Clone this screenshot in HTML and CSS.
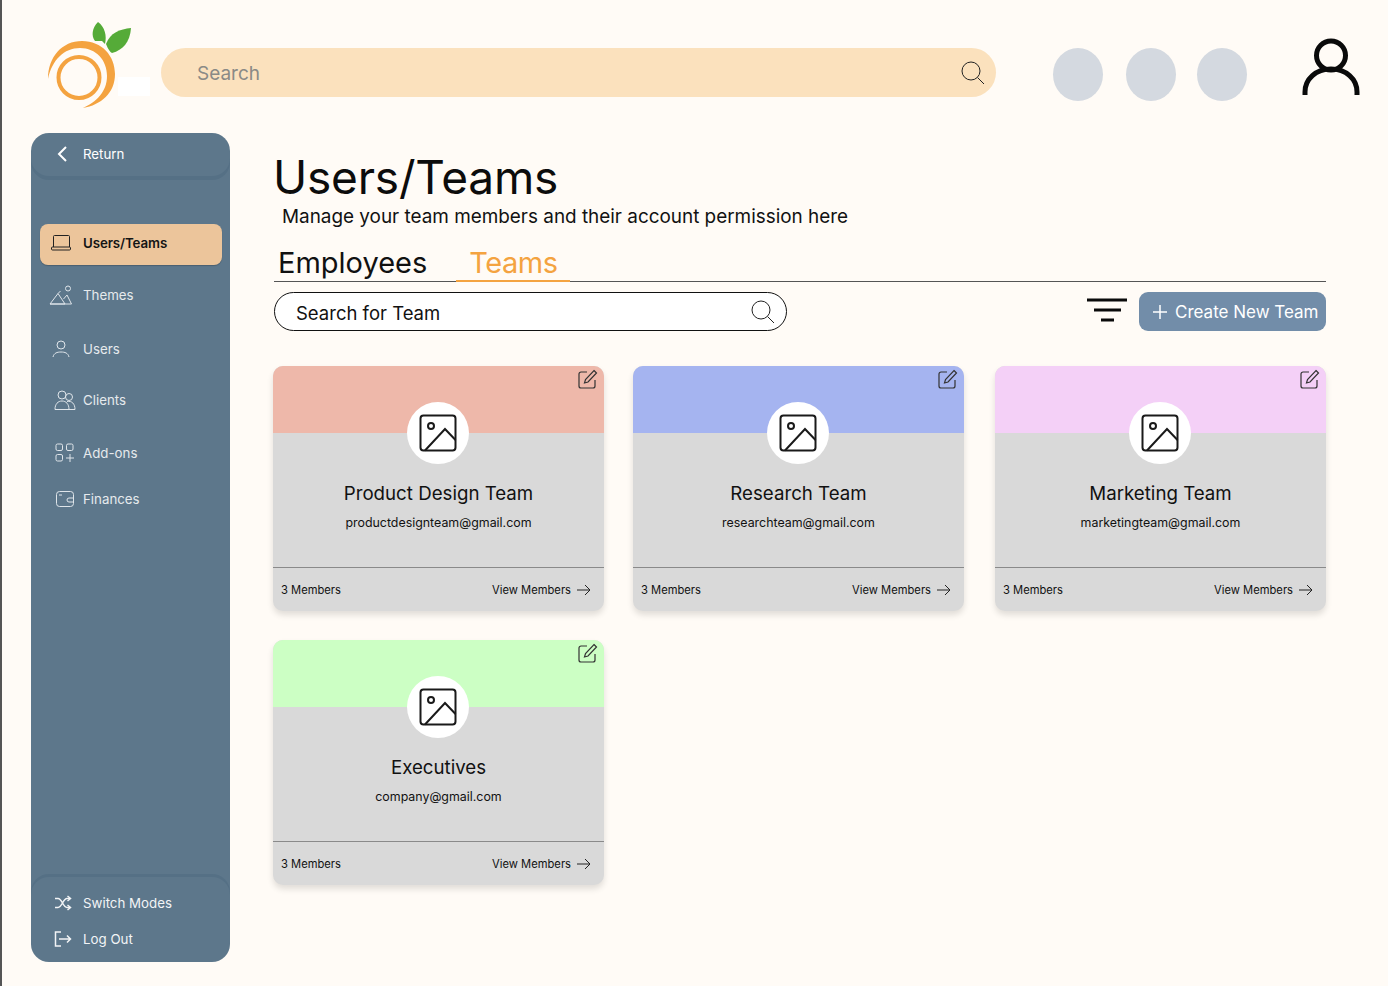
FILE: index.html
```html
<!DOCTYPE html>
<html lang="en">

<head>
    <meta charset="UTF-8">
    <title>Users/Teams</title>
    <link rel="stylesheet" href="styles.css">
</head>

<body>
    <header class="topbar">
        <div class="logo">
            <svg width="106" height="88" viewBox="44 22 106 88">
                <path fill="#f4a340" d="M48 79C48 57 62 41 82 41C102 41 115 56 115 74C115 93 101 105 83 108C96 102 107 92 107 76C107 60 96 48 80 48C64 48 52 60 48 79Z" />
                <circle cx="79" cy="77.5" r="20.5" fill="none" stroke="#f4a340" stroke-width="4" />
                <path fill="#55ab38" d="M98 22C92 28 91 36 95 41L102 41L105 44C107 36 105 27 98 22Z" />
                <path fill="#55ab38" d="M131 28C120 29 110 33 106 44C108 49 110 52 112 53C123 50 130 42 131 28Z" />
                <rect x="118" y="77" width="32" height="19" fill="#fff" />
            </svg>
        </div>
        <div class="top-search">
            <span>Search</span>
            <svg width="24" height="24" viewBox="0 0 24 24" fill="none" stroke="#222" stroke-width="1">
                <circle cx="10" cy="10" r="9" />
                <path d="M16.5 16.5L23 23" />
            </svg>
        </div>
        <div class="dots">
            <i class="dot"></i>
            <i class="dot"></i>
            <i class="dot"></i>
        </div>
        <svg class="account" width="58" height="58" viewBox="0 0 58 58" fill="none" stroke="#0a0a0a" stroke-width="5">
            <circle cx="29" cy="17.5" r="14.5" />
            <path d="M3 57V54C3 41 14 31 29 31C44 31 55 41 55 54V57" />
        </svg>
    </header>

    <div class="layout">
        <aside class="sidebar">
            <div class="return">
                <svg width="12" height="18" viewBox="0 0 12 18" fill="none" stroke="#fff" stroke-width="2">
                    <path d="M10 2L3 9L10 16" />
                </svg>
                <span>Return</span>
            </div>

            <nav class="menu">
                <a class="menu-item active">
                    <svg width="22" height="18" viewBox="0 0 22 18" fill="none" stroke="#222" stroke-width="1">
                        <path d="M3.5 13V2.5A1 1 0 0 1 4.500 1.500H18.500A1 1 0 0 1 19.500 2.500V13" />
                        <rect x="1.500" y="13" width="19" height="3" rx="1" />
                    </svg>
                    Users/Teams
                </a>
                <a class="menu-item">
                    <svg width="24" height="20" viewBox="0 0 24 20" fill="none" stroke="#dfe5ea" stroke-width="1">
                        <circle cx="19" cy="3.500" r="2.500" />
                        <path d="M1 19L9 8.500L16 19ZM1 19H22.500L18 10L14.500 14M9 8.500L11.500 6" />
                    </svg>
                    Themes
                </a>
                <a class="menu-item">
                    <svg width="18" height="18" viewBox="0 0 18 18" fill="none" stroke="#dfe5ea" stroke-width="1">
                        <circle cx="9" cy="5" r="4" />
                        <path d="M1 17C2 13 5 12 9 12C13 12 16 13 17 17" />
                    </svg>
                    Users
                </a>
                <a class="menu-item">
                    <svg width="22" height="20" viewBox="0 0 22 20" fill="none" stroke="#dfe5ea" stroke-width="1">
                        <circle cx="8" cy="5" r="4" />
                        <circle cx="15" cy="7" r="3.500" />
                        <path d="M1 19.500C1 14 4 11 8 11C12 11 15 14 15 19.500ZM13 11.500C18 10.500 21 14 21 19.500H15" />
                    </svg>
                    Clients
                </a>
                <a class="menu-item">
                    <svg width="20" height="20" viewBox="0 0 20 20" fill="none" stroke="#dfe5ea" stroke-width="1">
                        <rect x="1" y="1" width="6.500" height="6.500" rx="1.500" />
                        <rect x="11.500" y="1" width="6.500" height="6.500" rx="1.500" />
                        <rect x="1" y="11.500" width="6.500" height="6.500" rx="1.500" />
                        <path d="M15 11V19M11 15H19" />
                    </svg>
                    Add-ons
                </a>
                <a class="menu-item">
                    <svg width="18" height="16" viewBox="0 0 18 16" fill="none" stroke="#dfe5ea" stroke-width="1">
                        <rect x="0.500" y="0.500" width="17" height="15" rx="3" />
                        <path d="M3 4H6M17.500 7H13A1.500 1.500 0 0 0 13 11H17.500" />
                    </svg>
                    Finances
                </a>
            </nav>

            <div class="side-bottom">
                <a class="bottom-item">
                    <svg width="18" height="16" viewBox="0 0 18 16" fill="none" stroke="#f2f4f6" stroke-width="1.500">
                        <path d="M1 3.500H4C8 3.500 9 12.500 13 12.500H16M1 12.500H4C8 12.500 9 3.500 13 3.500H16" />
                        <path d="M13.500 1L16.500 3.500L13.500 6M13.500 10L16.500 12.500L13.500 15" />
                    </svg>
                    Switch Modes
                </a>
                <a class="bottom-item">
                    <svg width="18" height="16" viewBox="0 0 18 16" fill="none" stroke="#f2f4f6" stroke-width="1.500">
                        <path d="M7 1H1.500V15H7M5 8H16.500M13 4.500L16.500 8L13 11.500" />
                    </svg>
                    Log Out
                </a>
            </div>
        </aside>

        <main class="content">
            <h1>Users/Teams</h1>
            <p class="sub">Manage your team members and their account permission here</p>

            <div class="tabs">
                <span class="tab">Employees</span>
                <span class="tab current">Teams</span>
            </div>

            <div class="toolbar">
                <div class="team-search">
                    <span>Search for Team</span>
                    <svg width="24" height="24" viewBox="0 0 24 24" fill="none" stroke="#222" stroke-width="1">
                        <circle cx="10" cy="10" r="9" />
                        <path d="M16.500 16.500L23 23" />
                    </svg>
                </div>
                <svg class="filter" width="40" height="24" viewBox="0 0 40 24" fill="none" stroke="#0a0a0a" stroke-width="3">
                    <path d="M0 2H40M7 12H34M14 22H27" />
                </svg>
                <button class="create">
                    <svg width="16" height="16" viewBox="0 0 16 16" fill="none" stroke="#fff" stroke-width="1.500">
                        <path d="M8 1V15M1 8H15" />
                    </svg>
                    Create New Team
                </button>
            </div>

            <section class="cards">
                <article class="card salmon">
                    <div class="card-top">
                        <svg class="edit" width="20" height="20" viewBox="0 0 20 20" fill="none" stroke="#333" stroke-width="1.200">
                            <path d="M9 3H3A2 2 0 0 0 1 5V17A2 2 0 0 0 3 19H15A2 2 0 0 0 17 17V11" />
                            <path d="M16 1.500L18.500 4L10 13L6.500 14L7.500 10.500Z" />
                        </svg>
                        <div class="avatar">
                            <svg width="38" height="38" viewBox="0 0 38 38" fill="none" stroke="#1a1a1a" stroke-width="2">
                                <rect x="1.500" y="1.500" width="35" height="35" rx="3" />
                                <circle cx="12" cy="12" r="3" />
                                <path d="M6 36.500L26 15L36.500 26" />
                            </svg>
                        </div>
                    </div>
                    <div class="card-body">
                        <h2>Product Design Team</h2>
                        <p>productdesignteam@gmail.com</p>
                    </div>
                    <div class="card-foot">
                        <span>3 Members</span>
                        <a>View Members
                            <svg width="14" height="12" viewBox="0 0 14 12" fill="none" stroke="#222" stroke-width="1">
                                <path d="M0 6H13M8 1L13 6L8 11" />
                            </svg>
                        </a>
                    </div>
                </article>

                <article class="card periwinkle">
                    <div class="card-top">
                        <svg class="edit" width="20" height="20" viewBox="0 0 20 20" fill="none" stroke="#333" stroke-width="1.200">
                            <path d="M9 3H3A2 2 0 0 0 1 5V17A2 2 0 0 0 3 19H15A2 2 0 0 0 17 17V11" />
                            <path d="M16 1.500L18.500 4L10 13L6.500 14L7.500 10.500Z" />
                        </svg>
                        <div class="avatar">
                            <svg width="38" height="38" viewBox="0 0 38 38" fill="none" stroke="#1a1a1a" stroke-width="2">
                                <rect x="1.500" y="1.500" width="35" height="35" rx="3" />
                                <circle cx="12" cy="12" r="3" />
                                <path d="M6 36.500L26 15L36.500 26" />
                            </svg>
                        </div>
                    </div>
                    <div class="card-body">
                        <h2>Research Team</h2>
                        <p>researchteam@gmail.com</p>
                    </div>
                    <div class="card-foot">
                        <span>3 Members</span>
                        <a>View Members
                            <svg width="14" height="12" viewBox="0 0 14 12" fill="none" stroke="#222" stroke-width="1">
                                <path d="M0 6H13M8 1L13 6L8 11" />
                            </svg>
                        </a>
                    </div>
                </article>

                <article class="card lilac">
                    <div class="card-top">
                        <svg class="edit" width="20" height="20" viewBox="0 0 20 20" fill="none" stroke="#333" stroke-width="1.200">
                            <path d="M9 3H3A2 2 0 0 0 1 5V17A2 2 0 0 0 3 19H15A2 2 0 0 0 17 17V11" />
                            <path d="M16 1.500L18.500 4L10 13L6.500 14L7.500 10.500Z" />
                        </svg>
                        <div class="avatar">
                            <svg width="38" height="38" viewBox="0 0 38 38" fill="none" stroke="#1a1a1a" stroke-width="2">
                                <rect x="1.500" y="1.500" width="35" height="35" rx="3" />
                                <circle cx="12" cy="12" r="3" />
                                <path d="M6 36.500L26 15L36.500 26" />
                            </svg>
                        </div>
                    </div>
                    <div class="card-body">
                        <h2>Marketing Team</h2>
                        <p>marketingteam@gmail.com</p>
                    </div>
                    <div class="card-foot">
                        <span>3 Members</span>
                        <a>View Members
                            <svg width="14" height="12" viewBox="0 0 14 12" fill="none" stroke="#222" stroke-width="1">
                                <path d="M0 6H13M8 1L13 6L8 11" />
                            </svg>
                        </a>
                    </div>
                </article>

                <article class="card mint">
                    <div class="card-top">
                        <svg class="edit" width="20" height="20" viewBox="0 0 20 20" fill="none" stroke="#333" stroke-width="1.200">
                            <path d="M9 3H3A2 2 0 0 0 1 5V17A2 2 0 0 0 3 19H15A2 2 0 0 0 17 17V11" />
                            <path d="M16 1.500L18.500 4L10 13L6.500 14L7.500 10.500Z" />
                        </svg>
                        <div class="avatar">
                            <svg width="38" height="38" viewBox="0 0 38 38" fill="none" stroke="#1a1a1a" stroke-width="2">
                                <rect x="1.500" y="1.500" width="35" height="35" rx="3" />
                                <circle cx="12" cy="12" r="3" />
                                <path d="M6 36.500L26 15L36.500 26" />
                            </svg>
                        </div>
                    </div>
                    <div class="card-body">
                        <h2>Executives</h2>
                        <p>company@gmail.com</p>
                    </div>
                    <div class="card-foot">
                        <span>3 Members</span>
                        <a>View Members
                            <svg width="14" height="12" viewBox="0 0 14 12" fill="none" stroke="#222" stroke-width="1">
                                <path d="M0 6H13M8 1L13 6L8 11" />
                            </svg>
                        </a>
                    </div>
                </article>
            </section>
        </main>
    </div>
</body>

</html>
```

FILE: styles.css
```css
* {
    box-sizing: border-box;
    margin: 0;
    padding: 0;
}

body {
    font-family: Inter, "Noto Sans", sans-serif;
    background: #fffbf6;
    color: #111;
    width: 1388px;
    height: 986px;
    overflow: hidden;
    border-left: 2px solid #555;
}

/* top bar */
.topbar {
    height: 133px;
    display: flex;
    padding: 22px 0 0 42px;
    align-items: flex-start;
}

.logo {
    width: 106px;
    height: 88px;
    margin-right: 11px;
}

.logo svg {
    display: block;
}

.top-search {
    width: 835px;
    height: 49px;
    margin-top: 26px;
    background: #fbe1bd;
    border-radius: 25px;
    display: flex;
    align-items: center;
    justify-content: space-between;
    padding: 0 11px 0 36px;
    font-size: 19px;
    color: #8a8a86;
}

.top-search span {
    padding-top: 2px;
}

.dots {
    display: flex;
    margin: 26px 0 0 57px;
}

.dot {
    width: 50px;
    height: 53px;
    border-radius: 50%;
    background: #d4d9e0;
    margin-right: 23px;
}

.dot:last-child {
    margin-right: 0;
}

.dot:nth-child(2) {
    margin-right: 21px;
}

.account {
    margin: 16px 0 0 55px;
}

/* layout */
.layout {
    display: flex;
    padding-left: 29px;
}

.sidebar {
    width: 199px;
    height: 829px;
    background: #5d778b;
    border-radius: 18px;
    display: flex;
    flex-direction: column;
    color: #e6eaed;
    font-size: 13.3px;
}

.return {
    height: 43px;
    padding: 0 0 1px 25px;
    display: flex;
    align-items: center;
    gap: 15px;
    color: #fff;
    border-radius: 18px;
    box-shadow: 0 4px 0 #557085;
}

.menu {
    padding: 48px 8px 0 9px;
    flex: 1;
}

.menu-item {
    height: 41px;
    display: flex;
    align-items: center;
    gap: 10px;
    padding: 0 0 3px 9px;
    margin-bottom: 11px;
}

.menu-item svg {
    width: 24px;
    flex-shrink: 0;
}

.menu-item:nth-child(n+4) svg {
    margin: 0 -4px 0 4px;
}

.menu-item:nth-child(2) {
    margin-bottom: 13px;
}

.menu-item:nth-child(3) {
    margin-bottom: 10px;
}

.menu-item:nth-child(4) {
    margin-bottom: 12px;
}

.menu-item:nth-child(5) {
    margin-bottom: 5px;
}

.active {
    background: #ecc59b;
    color: #151515;
    font-weight: 600;
    letter-spacing: -0.1px;
    border-radius: 8px;
    box-shadow: 0 1px 1px rgba(0, 0, 0, 0.2);
}

.side-bottom {
    height: 85px;
    border-radius: 18px;
    box-shadow: 0 -3px 0 #557085;
    padding: 8px 0 0 23px;
    color: #f2f4f6;
}

.bottom-item {
    height: 36px;
    display: flex;
    align-items: center;
    gap: 11px;
}

/* main */
.content {
    width: 1052px;
    margin-left: 44px;
}

h1 {
    font-size: 46px;
    font-weight: 400;
    letter-spacing: -0.2px;
    line-height: 58px;
    margin: 15px 0 0 -1px;
    color: #0c0c0c;
}

.sub {
    font-size: 18.9px;
    line-height: 26px;
    margin: -2px 0 0 8px;
}

.tabs {
    display: flex;
    height: 47px;
    margin-top: 5px;
    padding: 0 0 0 4px;
    border-bottom: 1px solid #555;
    align-items: flex-end;
}

.tab {
    font-size: 29px;
    line-height: 36px;
    height: 36px;
}

.current {
    color: #f4a340;
    letter-spacing: -0.5px;
    border-bottom: 2px solid #f4a340;
    margin-left: 29px;
    padding: 0 13px;
    height: 37px;
    margin-bottom: -1px;
}

.toolbar {
    display: flex;
    align-items: center;
    margin-top: 10px;
}

.team-search {
    width: 513px;
    height: 39px;
    background: #fff;
    border: 1px solid #111;
    border-radius: 20px;
    display: flex;
    align-items: center;
    justify-content: space-between;
    padding: 0 11px 0 21px;
    font-size: 18.5px;
}

.team-search span {
    padding-top: 2px;
}

.filter {
    margin: 0 0 4px 300px;
}

.create {
    width: 187px;
    height: 39px;
    margin-left: 12px;
    border: none;
    border-radius: 9px;
    background: #728da9;
    color: #fff;
    font-family: inherit;
    font-size: 17px;
    white-space: nowrap;
    display: flex;
    align-items: center;
    gap: 7px;
    padding: 1px 0 0 13px;
}

/* team cards */
.cards {
    display: grid;
    grid-template-columns: 360px 362px 331px;
    grid-auto-rows: 245px;
    row-gap: 29px;
    margin: 35px 0 0 -1px;
}

.card {
    width: 331px;
    background: #d9d9d9;
    border-radius: 10px;
    box-shadow: 0 4px 6px rgba(0, 0, 0, 0.12);
    display: flex;
    flex-direction: column;
}

.card-top {
    height: 67px;
    position: relative;
    border-radius: 10px 10px 0 0;
}

.salmon .card-top {
    background: #eeb8aa;
}

.periwinkle .card-top {
    background: #a5b4f0;
}

.lilac .card-top {
    background: #f4d0f7;
}

.mint .card-top {
    background: #ccffc4;
}

.edit {
    position: absolute;
    top: 3px;
    right: 6px;
}

.avatar {
    position: absolute;
    left: 134px;
    top: 36px;
    width: 62px;
    height: 62px;
    border-radius: 50%;
    background: #fff;
    display: flex;
    align-items: center;
    justify-content: center;
}

.card-body {
    flex: 1;
    text-align: center;
    padding-top: 49px;
    border-bottom: 1px solid #8a8a8a;
}

.card-body h2 {
    font-size: 18.7px;
    font-weight: 400;
    line-height: 24px;
}

.card-body p {
    font-size: 12.4px;
    line-height: 16px;
    margin-top: 9px;
}

.card-foot {
    height: 43px;
    display: flex;
    align-items: center;
    justify-content: space-between;
    padding: 1px 13px 0 8px;
    font-size: 11.2px;
}

.card-foot a {
    display: flex;
    align-items: center;
    gap: 6px;
}
```
